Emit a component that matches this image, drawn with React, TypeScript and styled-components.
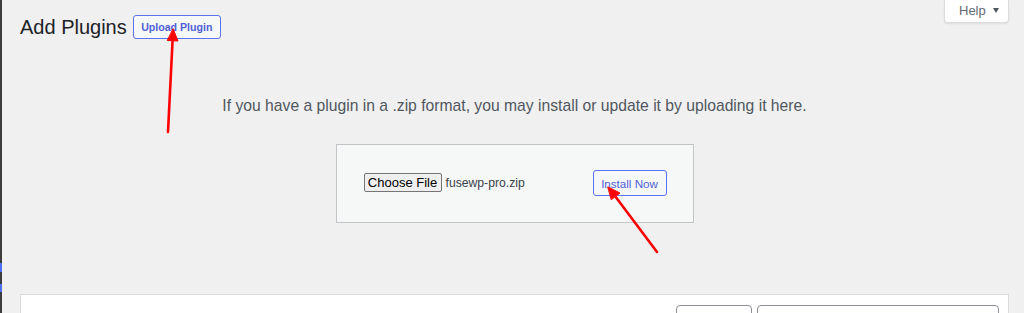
import React from "react";
import styled, { createGlobalStyle } from "styled-components";

const Global = createGlobalStyle`
  html, body { margin: 0; padding: 0; }
  body {
    background: #f0f0f1;
    font-family: "Liberation Sans", Arial, sans-serif;
    color: #3c434a;
    width: 1024px;
    height: 313px;
    overflow: hidden;
  }
`;

const Screen = styled.div`
  position: relative;
  display: flex;
  width: 1024px;
  height: 313px;
  overflow: hidden;
`;

const SideEdge = styled.div`
  width: 2px;
  flex: none;
  background: linear-gradient(
    to bottom,
    #3c3c3c 0 263px,
    #4f6ef7 263px 272px,
    #3c3c3c 272px 284px,
    #4f6ef7 284px 292px,
    #3c3c3c 292px
  );
`;

const Content = styled.div`
  flex: 1;
  display: flex;
  flex-direction: column;
  padding: 0 15px 0 18px;
  & > * { flex-shrink: 0; }
`;

const TopBar = styled.div`
  display: flex;
  justify-content: flex-end;
  height: 0;
`;

const HelpTab = styled.button`
  position: relative;
  z-index: 1;
  display: flex;
  align-items: center;
  gap: 7px;
  box-sizing: border-box;
  width: 65px;
  height: 23px;
  padding: 0 0 1px 14px;
  background: #fff;
  border: 1px solid #dcdcde;
  border-top: none;
  border-radius: 0 0 4px 4px;
  box-shadow: 0 1px 2px rgba(0, 0, 0, 0.08);
  font-family: "Liberation Sans", Arial, sans-serif;
  font-size: 13px;
  color: #646970;
`;

const Caret = styled.span`
  width: 0;
  height: 0;
  border-left: 3.5px solid transparent;
  border-right: 3.5px solid transparent;
  border-top: 5px solid #50575e;
`;

const Heading = styled.div`
  display: flex;
  align-items: center;
  gap: 6px;
  padding-top: 15px;
  height: 24px;
`;

const Title = styled.h1`
  margin: 0;
  font-family: "Liberation Sans", Arial, sans-serif;
  font-size: 20px;
  font-weight: 400;
  color: #1d2327;
  line-height: 24px;
`;

const OutlineButton = styled.button<{ $bold?: boolean; $w: number; $h: number }>`
  display: inline-flex;
  align-items: center;
  justify-content: center;
  box-sizing: border-box;
  width: ${(p) => p.$w}px;
  height: ${(p) => p.$h}px;
  padding: 0;
  background: #f6f7f7;
  border: 1px solid #5b73f0;
  border-radius: 3px;
  color: #4f5fd6;
  font-family: "Liberation Sans", Arial, sans-serif;
  font-size: ${(p) => (p.$bold ? 10.6 : 11.6)}px;
  font-weight: ${(p) => (p.$bold ? 700 : 400)};
`;

const Description = styled.p`
  margin: 0;
  padding-top: 57px;
  text-align: center;
  font-family: "Liberation Sans", Arial, sans-serif;
  font-size: 15.7px;
  line-height: 20px;
  color: #50575e;
`;

const UploadBox = styled.div`
  align-self: center;
  display: flex;
  align-items: center;
  justify-content: space-between;
  box-sizing: border-box;
  width: 358px;
  height: 79px;
  margin-top: 28px;
  padding: 0 26px 1px 27px;
  background: #f6f7f7;
  border: 1px solid #c3c4c7;
`;

const FileField = styled.div`
  display: flex;
  align-items: center;
  gap: 4px;
  margin-top: -1px;
  font-family: "Liberation Sans", Arial, sans-serif;
  font-size: 12.2px;
  color: #3c434a;
`;

const ChooseButton = styled.button`
  box-sizing: border-box;
  width: 78px;
  height: 19px;
  padding: 0;
  background: #efefef;
  border: 1px solid #767676;
  border-radius: 2px;
  font-family: "Liberation Sans", Arial, sans-serif;
  font-size: 13px;
  color: #000;
`;

const Browser = styled.div`
  box-sizing: border-box;
  margin-top: 71px;
  height: 40px;
  background: #fff;
  border: 1px solid #dcdcde;
  display: flex;
  justify-content: space-between;
  padding: 10px 9px 0 15px;
`;

const FilterLinks = styled.div`
  display: flex;
  gap: 12px;
  padding-top: 5px;
  font-family: "Liberation Sans", Arial, sans-serif;
  font-size: 13px;
  font-weight: 600;
  color: #1d2327;
`;

const SearchForm = styled.div`
  display: flex;
  gap: 5px;
`;

const Field = styled.div<{ $w: number }>`
  box-sizing: border-box;
  width: ${(p) => p.$w}px;
  height: 30px;
  background: #fff;
  border: 1px solid #8c8f94;
  border-radius: 4px;
`;

const Overlay = styled.svg`
  position: absolute;
  left: 0;
  top: 0;
  pointer-events: none;
`;

export default function App() {
  return (
    <Screen>
      <Global />
      <SideEdge />
      <Content>
        <TopBar>
          <HelpTab>
            Help <Caret />
          </HelpTab>
        </TopBar>
        <Heading>
          <Title>Add Plugins</Title>
          <OutlineButton $bold $w={88} $h={24}>
            Upload Plugin
          </OutlineButton>
        </Heading>
        <Description>
          If you have a plugin in a .zip format, you may install or update it by uploading it here.
        </Description>
        <UploadBox>
          <FileField>
            <ChooseButton>Choose File</ChooseButton>
            fusewp-pro.zip
          </FileField>
          <OutlineButton $w={74} $h={26}>
            Install Now
          </OutlineButton>
        </UploadBox>
        <Browser>
          <FilterLinks>
            <span>Featured</span>
            <span>Popular</span>
            <span>Recommended</span>
            <span>Favorites</span>
          </FilterLinks>
          <SearchForm>
            <Field $w={76} />
            <Field $w={242} />
          </SearchForm>
        </Browser>
      </Content>
      <Overlay width="1024" height="313" viewBox="0 0 1024 313">
        <g stroke="#f00" strokeWidth="2.6" strokeLinecap="round" fill="#f00">
          <line x1="168" y1="132" x2="172.6" y2="40" />
          <polygon points="173.2,29 178,41 167.6,40.5" strokeWidth="1" strokeLinejoin="round" />
          <line x1="657" y1="252" x2="615" y2="196" />
          <polygon points="608,187 620,193 611.5,199.5" strokeWidth="1" strokeLinejoin="round" />
        </g>
      </Overlay>
    </Screen>
  );
}
